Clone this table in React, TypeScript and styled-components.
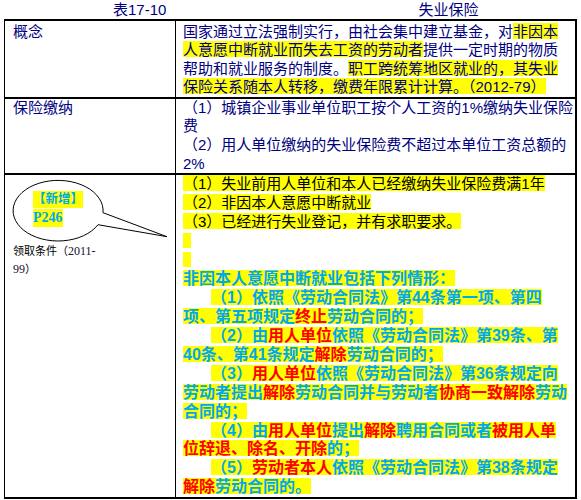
import React from "react";
import styled, { createGlobalStyle } from "styled-components";

const GlobalStyle = createGlobalStyle`
  html, body { margin: 0; padding: 0; background: #ffffff; }
  body { font-family: "Liberation Sans", "Noto Sans CJK SC", sans-serif; }
`;

const NAVY = "#000080";
const BLUE = "#00a8ee";
const RED = "#ff0000";
const YELLOW = "#ffff00";

const Page = styled.div`
  width: 581px;
  padding-left: 4px;
  box-sizing: border-box;
`;

const TitleRow = styled.div`
  display: flex;
  height: 19px;
  align-items: center;
  padding-left: 109px;
  gap: 252px;
  color: ${NAVY};
  font-size: 15px;
  line-height: 19px;
`;

const Table = styled.div`
  display: grid;
  grid-template-columns: 171px 1fr;
  width: 573px;
  box-sizing: border-box;
  border-top: 2px solid #000;
  border-left: 1px solid #000;
  border-right: 2px solid #000;
`;

const Cell = styled.div<{ $side: "left" | "right"; $pt: number; $lh: number; $color?: string }>`
  border-bottom: 2px solid #000;
  border-right: ${(p) => (p.$side === "left" ? "1px solid #000" : "none")};
  padding: ${(p) => p.$pt}px 4px 0 ${(p) => (p.$side === "left" ? 8 : 7)}px;
  line-height: ${(p) => p.$lh}px;
  font-size: 15px;
  color: ${(p) => p.$color ?? NAVY};
  min-width: 0;
`;

const Line = styled.div<{ $indent?: boolean }>`
  white-space: nowrap;
  padding-left: ${(p) => (p.$indent ? 28 : 0)}px;
`;

const BoldLine = styled(Line)`
  font-size: 16px;
  font-weight: 700;
  color: ${BLUE};
`;

const Mark = styled.span`
  background: linear-gradient(
    to bottom,
    transparent 2%,
    ${YELLOW} 2%,
    ${YELLOW} 92%,
    transparent 92%
  );
`;

const Red = styled.span`
  color: ${RED};
`;

const Blank = styled.span`
  display: inline-block;
  width: 8px;
  height: 15px;
  background: ${YELLOW};
  vertical-align: -2px;
`;

const Callout = styled.div`
  position: relative;
  height: 67px;
  padding: 16px 0 0 20px;
  box-sizing: border-box;
`;

const Bubble = styled.svg`
  position: absolute;
  left: 0;
  top: 0;
  overflow: visible;
  pointer-events: none;
`;

const NewTag = styled.div`
  position: relative;
  width: fit-content;
  background: ${YELLOW};
  color: ${BLUE};
  font-weight: 700;
  font-size: 12.5px;
  line-height: 17px;
  white-space: nowrap;
`;

const PageTag = styled.div`
  position: relative;
  width: fit-content;
  margin-top: 1px;
  background: ${YELLOW};
  color: ${BLUE};
  font-family: "Liberation Serif", serif;
  font-weight: 700;
  font-size: 14px;
  line-height: 18px;
`;

const Condition = styled.div`
  color: #000;
  font-size: 11px;
  line-height: 18px;
`;

const Num = styled.span`
  font-family: "Liberation Serif", serif;
  font-size: 12px;
  color: #111133;
`;

export default function App() {
  return (
    <Page>
      <GlobalStyle />
      <TitleRow>
        <span>表17-10</span>
        <span>失业保险</span>
      </TitleRow>
      <Table>
        <Cell $side="left" $pt={1.5} $lh={18.5}>
          概念
        </Cell>
        <Cell $side="right" $pt={1.5} $lh={18.5}>
          <Line>
            国家通过立法强制实行，由社会集中建立基金，对<Mark>非因本</Mark>
          </Line>
          <Line>
            <Mark>人意愿中断就业而失去工资的劳动者</Mark>提供一定时期的物质
          </Line>
          <Line>
            帮助和就业服务的制度。<Mark>职工跨统筹地区就业的，其失业</Mark>
          </Line>
          <Line>
            <Mark>保险关系随本人转移，缴费年限累计计算。（2012-79）</Mark>
          </Line>
        </Cell>

        <Cell $side="left" $pt={0} $lh={18.7}>
          保险缴纳
        </Cell>
        <Cell $side="right" $pt={0} $lh={18.7}>
          <Line>（1）城镇企业事业单位职工按个人工资的1%缴纳失业保险</Line>
          <Line>费</Line>
          <Line>（2）用人单位缴纳的失业保险费不超过本单位工资总额的</Line>
          <Line>2%</Line>
        </Cell>

        <Cell $side="left" $pt={0} $lh={18.94} $color="#000">
          <Callout>
            <Bubble width="160" height="70" viewBox="0 0 160 70">
              <path
                d="M 90 37.7 L 154 61.7 L 85 49.7 A 45 30.3 0 1 1 90 37.7"
                fill="none"
                stroke="#000"
                strokeWidth="1"
              />
            </Bubble>
            <NewTag>【新增】</NewTag>
            <PageTag>P246</PageTag>
          </Callout>
          <Condition>
            <div>
              领取条件（<Num>2011-</Num>
            </div>
            <div>
              <Num>99</Num>）
            </div>
          </Condition>
        </Cell>
        <Cell $side="right" $pt={0} $lh={18.94} $color="#000">
          <Line>
            <Mark>（1）失业前用人单位和本人已经缴纳失业保险费满1年</Mark>
          </Line>
          <Line>
            <Mark>（2）非因本人意愿中断就业</Mark>
          </Line>
          <Line>
            <Mark>（3）已经进行失业登记，并有求职要求。</Mark>
          </Line>
          <Line>
            <Blank />
          </Line>
          <Line>
            <Blank />
          </Line>
          <BoldLine>
            <Mark>非因本人意愿中断就业包括下列情形：</Mark>
          </BoldLine>
          <BoldLine $indent>
            <Mark>（1）依照《劳动合同法》第44条第一项、第四</Mark>
          </BoldLine>
          <BoldLine>
            <Mark>
              项、第五项规定<Red>终止</Red>劳动合同的；
            </Mark>
          </BoldLine>
          <BoldLine $indent>
            <Mark>
              （2）由<Red>用人单位</Red>依照《劳动合同法》第39条、第
            </Mark>
          </BoldLine>
          <BoldLine>
            <Mark>
              40条、第41条规定<Red>解除</Red>劳动合同的；
            </Mark>
          </BoldLine>
          <BoldLine $indent>
            <Mark>
              （3）<Red>用人单位</Red>依照《劳动合同法》第36条规定向
            </Mark>
          </BoldLine>
          <BoldLine>
            <Mark>
              劳动者提出<Red>解除</Red>劳动合同并与劳动者<Red>协商一致解除</Red>劳动
            </Mark>
          </BoldLine>
          <BoldLine>
            <Mark>合同的；</Mark>
          </BoldLine>
          <BoldLine $indent>
            <Mark>
              （4）由<Red>用人单位</Red>提出<Red>解除</Red>聘用合同或者<Red>被用人单</Red>
            </Mark>
          </BoldLine>
          <BoldLine>
            <Mark>
              <Red>位辞退、除名、开除</Red>的；
            </Mark>
          </BoldLine>
          <BoldLine $indent>
            <Mark>
              （5）<Red>劳动者本人</Red>依照《劳动合同法》第38条规定
            </Mark>
          </BoldLine>
          <BoldLine>
            <Mark>
              <Red>解除</Red>劳动合同的。
            </Mark>
          </BoldLine>
        </Cell>
      </Table>
    </Page>
  );
}
